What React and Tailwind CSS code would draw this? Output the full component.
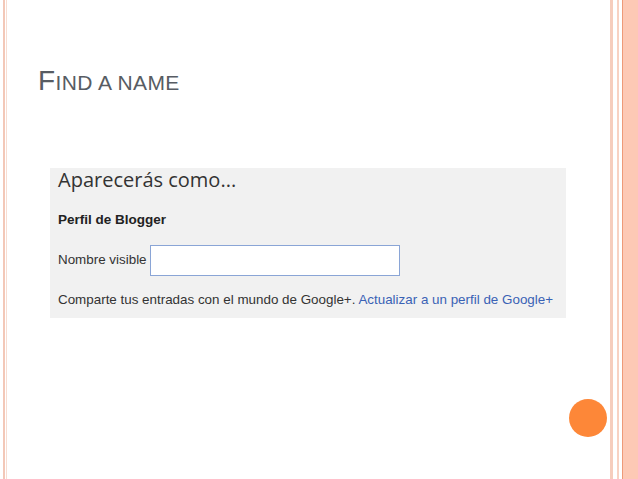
export default function App() {
  return (
    <div className="flex w-[638px] h-[479px] bg-white overflow-hidden" style={{ fontFamily: '"Liberation Sans", Arial, sans-serif' }}>
      {/* left frame lines */}
      <div className="flex shrink-0 pl-[3px] gap-[1px]">
        <div className="w-[2px] bg-[#f3c8b8]" />
        <div className="w-[1px] bg-[#f8ddd2]" />
      </div>

      <main className="relative flex-1 pl-[31px]">
        <h1 className="pt-[67px] text-[#575c63] leading-none tracking-[0.4px]">
          <span className="text-[28px]">F</span>
          <span className="text-[21px]">IND A NAME</span>
        </h1>

        <section className="ml-[12px] mt-[73px] w-[516px] h-[150px] bg-[#f1f1f1] pl-[8px]">
          <div className="text-[20px] text-[#333] leading-[23px]" style={{ fontFamily: '"Open Sans", sans-serif' }}>
            Aparecerás como...
          </div>
          <div className="mt-[21px] text-[13.5px] font-bold text-[#222] leading-[16px]">Perfil de Blogger</div>
          <div className="mt-[17px] flex items-center gap-[3px]">
            <span className="text-[13.4px] text-[#333]">Nombre visible</span>
            <div className="w-[250px] h-[31px] bg-white border border-[#8aa5d6]" />
          </div>
          <div className="mt-[16px] text-[13.4px] text-[#333] leading-[16px]">
            Comparte tus entradas con el mundo de Google+. <span className="text-[#3a62b5]">Actualizar a un perfil de Google+</span>
          </div>
        </section>

        <div className="absolute left-[562px] top-[399px] w-[38px] h-[38px] rounded-full bg-[#fd8738]" />
      </main>

      {/* right frame */}
      <div className="flex shrink-0">
        <div className="w-[3px] bg-[#f6cdbd]" />
        <div className="w-[4px]" />
        <div className="w-[2px] bg-[#f8d2c3]" />
        <div className="w-[3px]" />
        <div className="w-[1px] bg-[#ee9a78]" />
        <div className="w-[15px] bg-[#fdc9b5]" />
      </div>
    </div>
  );
}
